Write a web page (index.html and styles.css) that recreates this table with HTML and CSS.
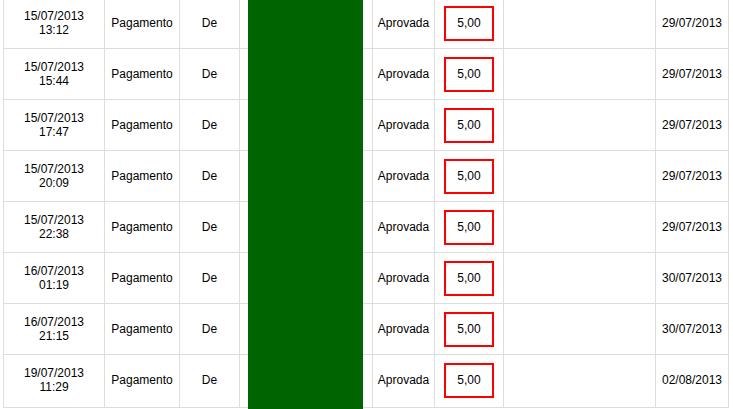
FILE: index.html
```html
<!doctype html>
<html lang="pt">
  <head>
    <title>Extrato</title>
    <link rel="stylesheet" href="styles.css">
  </head>
  <body>
    <div id="page">
      <table id="extrato">
        <colgroup>
          <col class="c-data">
          <col class="c-tipo">
          <col class="c-de">
          <col class="c-nome">
          <col class="c-status">
          <col class="c-valor">
          <col class="c-vazio">
          <col class="c-liberacao">
        </colgroup>
        <tbody>
          <tr>
            <td>15/07/2013<br>13:12</td>
            <td>Pagamento</td>
            <td>De</td>
            <td></td>
            <td>Aprovada</td>
            <td><span class="valor">5,00</span></td>
            <td></td>
            <td>29/07/2013</td>
          </tr>
          <tr>
            <td>15/07/2013<br>15:44</td>
            <td>Pagamento</td>
            <td>De</td>
            <td></td>
            <td>Aprovada</td>
            <td><span class="valor">5,00</span></td>
            <td></td>
            <td>29/07/2013</td>
          </tr>
          <tr>
            <td>15/07/2013<br>17:47</td>
            <td>Pagamento</td>
            <td>De</td>
            <td></td>
            <td>Aprovada</td>
            <td><span class="valor">5,00</span></td>
            <td></td>
            <td>29/07/2013</td>
          </tr>
          <tr>
            <td>15/07/2013<br>20:09</td>
            <td>Pagamento</td>
            <td>De</td>
            <td></td>
            <td>Aprovada</td>
            <td><span class="valor">5,00</span></td>
            <td></td>
            <td>29/07/2013</td>
          </tr>
          <tr>
            <td>15/07/2013<br>22:38</td>
            <td>Pagamento</td>
            <td>De</td>
            <td></td>
            <td>Aprovada</td>
            <td><span class="valor">5,00</span></td>
            <td></td>
            <td>29/07/2013</td>
          </tr>
          <tr>
            <td>16/07/2013<br>01:19</td>
            <td>Pagamento</td>
            <td>De</td>
            <td></td>
            <td>Aprovada</td>
            <td><span class="valor">5,00</span></td>
            <td></td>
            <td>30/07/2013</td>
          </tr>
          <tr>
            <td>16/07/2013<br>21:15</td>
            <td>Pagamento</td>
            <td>De</td>
            <td></td>
            <td>Aprovada</td>
            <td><span class="valor">5,00</span></td>
            <td></td>
            <td>30/07/2013</td>
          </tr>
          <tr class="last">
            <td>19/07/2013<br>11:29</td>
            <td>Pagamento</td>
            <td>De</td>
            <td></td>
            <td>Aprovada</td>
            <td><span class="valor">5,00</span></td>
            <td></td>
            <td>02/08/2013</td>
          </tr>
        </tbody>
      </table>
      <div class="tarja"></div>
    </div>
  </body>
</html>
```

FILE: styles.css
```css
html,
body {
  margin: 0;
  background-color: #fff;
  color: #000;
  font-family: "Liberation Sans", Arial, sans-serif;
  font-size: 12px;
}

#page {
  position: relative;
  height: 409px;
  overflow: hidden;
  padding-left: 3px;
}

#extrato {
  border-collapse: collapse;
  table-layout: fixed;
  width: 726px;
  margin-top: -3px;
}

#extrato td {
  border: 1px solid #dddddd;
  height: 50px;
  padding: 0;
  text-align: center;
  vertical-align: middle;
  line-height: 14px;
}

#extrato tr.last td {
  padding-bottom: 2px;
}

.c-data { width: 101px; }
.c-tipo { width: 75px; }
.c-de { width: 60px; }
.c-nome { width: 133px; }
.c-status { width: 62px; }
.c-valor { width: 69px; }
.c-vazio { width: 152px; }
.c-liberacao { width: 73px; }

.valor {
  display: inline-block;
  box-sizing: border-box;
  width: 50px;
  height: 35px;
  line-height: 31px;
  border: 2px solid #ff0000;
  vertical-align: middle;
}

/* tarja verde sobre a coluna do nome */
.tarja {
  position: absolute;
  top: 0;
  left: 248px;
  width: 115px;
  height: 409px;
  background-color: #006400;
}
```
